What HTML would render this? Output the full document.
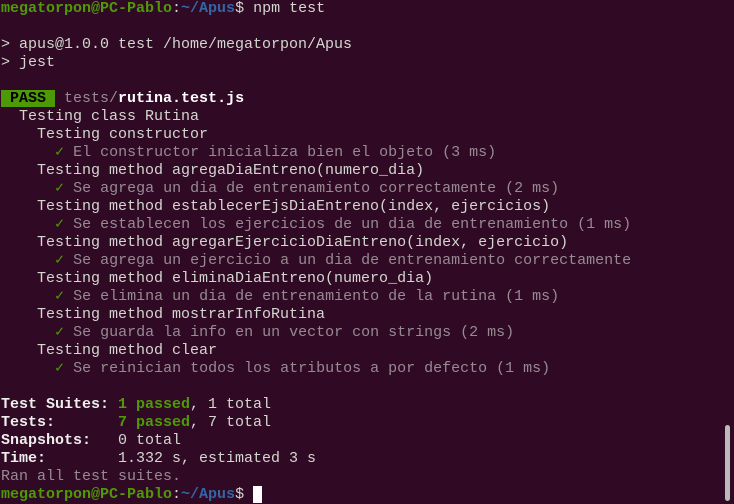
<!DOCTYPE html>
<html><head><meta charset="utf-8"><style>
body{margin:0;width:734px;height:504px;background:#300a24;overflow:hidden;position:relative}
pre{margin:0;padding:0;position:absolute;left:1px;top:0px;font-family:"Liberation Mono",monospace;font-size:15px;line-height:18px;color:#d3d7cf;white-space:pre}
.g{color:#4e9a06;font-weight:bold}.b{color:#3465a4;font-weight:bold}.gn{color:#4e9a06}
.d{color:#978a93}.w{color:#fff;font-weight:bold}.bo{font-weight:bold;color:#eeeeec}
.pass{background:#4e9a06;color:#000;font-weight:bold}
.cur{background:#fff;color:#fff}
.sb{position:absolute;left:725px;top:425px;width:5px;height:76px;background:#bbb;border-radius:3px}
</style></head><body>
<pre><span class="g">megatorpon@PC-Pablo</span>:<span class="b">~/Apus</span>$ npm test

&gt; apus@1.0.0 test /home/megatorpon/Apus
&gt; jest

<span class="pass"> PASS </span> <span class="d">tests/</span><span class="w">rutina.test.js</span>
  Testing class Rutina
    Testing constructor
      <span class="gn">✓</span> <span class="d">El constructor inicializa bien el objeto (3 ms)</span>
    Testing method agregaDiaEntreno(numero_dia)
      <span class="gn">✓</span> <span class="d">Se agrega un dia de entrenamiento correctamente (2 ms)</span>
    Testing method establecerEjsDiaEntreno(index, ejercicios)
      <span class="gn">✓</span> <span class="d">Se establecen los ejercicios de un dia de entrenamiento (1 ms)</span>
    Testing method agregarEjercicioDiaEntreno(index, ejercicio)
      <span class="gn">✓</span> <span class="d">Se agrega un ejercicio a un dia de entrenamiento correctamente</span>
    Testing method eliminaDiaEntreno(numero_dia)
      <span class="gn">✓</span> <span class="d">Se elimina un dia de entrenamiento de la rutina (1 ms)</span>
    Testing method mostrarInfoRutina
      <span class="gn">✓</span> <span class="d">Se guarda la info en un vector con strings (2 ms)</span>
    Testing method clear
      <span class="gn">✓</span> <span class="d">Se reinician todos los atributos a por defecto (1 ms)</span>

<span class="bo">Test Suites: </span><span class="g">1 passed</span>, 1 total
<span class="bo">Tests:       </span><span class="g">7 passed</span>, 7 total
<span class="bo">Snapshots:   </span>0 total
<span class="bo">Time:        </span>1.332 s, estimated 3 s
<span class="d">Ran all test suites.</span>
<span class="g">megatorpon@PC-Pablo</span>:<span class="b">~/Apus</span>$ <span class="cur"> </span></pre>
<div class="sb"></div>
</body></html>
